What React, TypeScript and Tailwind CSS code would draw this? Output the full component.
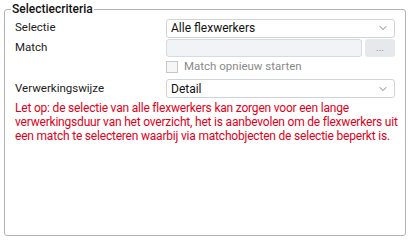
import { ChevronDown } from "lucide-react";

export default function App() {
  return (
    <div
      className="w-[410px] h-[241px] bg-white px-1 pt-[2px] text-[11.5px] text-[#222]"
      style={{ fontFamily: "Roboto, 'Liberation Sans', sans-serif" }}
    >
      <fieldset className="h-[234px] border border-[#b3b3b3] rounded-[3px] pl-[10px] pr-[10px]">
        <legend className="px-[1px] -ml-[4px] font-medium text-[12px] leading-[14px] text-[#111]">
          Selectiecriteria
        </legend>

        <div className="flex flex-col pt-[2px]">
          {/* Selectie */}
          <div className="flex items-center h-[20px]">
            <label className="w-[151px] shrink-0">Selectie</label>
            <div className="flex-1 h-[19px] flex items-center justify-between border border-[#cfd4d9] rounded-[3px] pl-[4px] pr-[5px] bg-white">
              <span className="text-[12px] text-[#111]">Alle flexwerkers</span>
              <ChevronDown size={12} strokeWidth={1.5} className="text-[#555]" />
            </div>
          </div>

          {/* Match */}
          <div className="flex items-center h-[19px]">
            <label className="w-[151px] shrink-0">Match</label>
            <div className="flex-1 flex gap-[3px] h-[18px]">
              <div className="flex-1 border border-[#d5dbe0] rounded-[3px] bg-[#f1f4f7]" />
              <div className="w-[30px] rounded-[3px] bg-[#e6e9ec] text-[#8a949e] text-[10px] flex items-center justify-center">
                ...
              </div>
            </div>
          </div>

          {/* Checkbox */}
          <div className="flex items-center h-[20px] pl-[151px]">
            <span className="w-[12px] h-[12px] border border-[#c6c6c6] bg-[#f6f6f6]" />
            <span className="ml-[6px] text-[#8a8a8a]">Match opnieuw starten</span>
          </div>

          {/* Verwerkingswijze */}
          <div className="flex items-center h-[19px] mt-[2px]">
            <label className="w-[151px] shrink-0">Verwerkingswijze</label>
            <div className="flex-1 h-[19px] flex items-center justify-between border border-[#cfd4d9] rounded-[3px] pl-[4px] pr-[5px] bg-white">
              <span className="text-[12px] text-[#111]">Detail</span>
              <ChevronDown size={12} strokeWidth={1.5} className="text-[#555]" />
            </div>
          </div>

          <p className="mt-[3px] -mr-[8px] text-[12px] tracking-[-0.2px] text-[#e0001a] leading-[14px]">
            Let op: de selectie van alle flexwerkers kan zorgen voor een lange
            verwerkingsduur van het overzicht, het is aanbevolen om de
            flexwerkers uit een match te selecteren waarbij via matchobjecten de
            selectie beperkt is.
          </p>
        </div>
      </fieldset>
    </div>
  );
}
